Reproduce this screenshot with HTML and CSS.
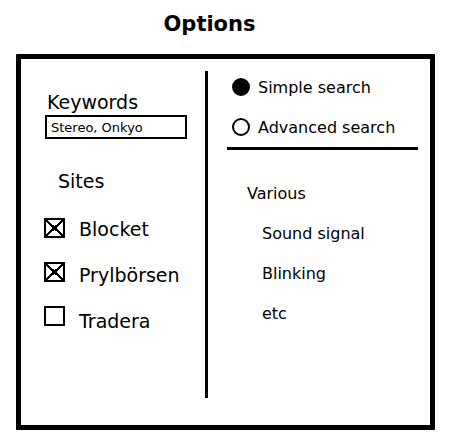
FILE: index.html
```html
<!DOCTYPE html>
<html lang="en">
<head>
<meta charset="utf-8">
<title>Options</title>
<link rel="stylesheet" href="styles.css">
</head>
<body>
<h1 class="title">Options</h1>
<form class="panel">
  <section class="filters">
    <label class="keywords-label" for="keywords">Keywords</label>
    <input class="keywords" id="keywords" type="text" value="Stereo, Onkyo">
    <h2 class="sites-title">Sites</h2>
    <div class="sites">
      <div class="boxes">
        <input class="box" id="blocket" type="checkbox" checked>
        <input class="box" id="prylborsen" type="checkbox" checked>
        <input class="box" id="tradera" type="checkbox">
      </div>
      <div class="names">
        <label for="blocket">Blocket</label>
        <label for="prylborsen">Prylbörsen</label>
        <label for="tradera">Tradera</label>
      </div>
    </div>
  </section>
  <div class="divider"></div>
  <section class="settings">
    <div class="modes">
      <label class="mode"><input class="radio" type="radio" name="mode" checked>Simple search</label>
      <label class="mode"><input class="radio" type="radio" name="mode">Advanced search</label>
    </div>
    <hr class="rule">
    <h2 class="various-title">Various</h2>
    <ul class="various">
      <li>Sound signal</li>
      <li>Blinking</li>
      <li>etc</li>
    </ul>
  </section>
</form>
</body>
</html>
```
FILE: styles.css
```css
* {
  box-sizing: border-box;
}

body {
  display: flex;
  flex-direction: column;
  min-height: 100vh;
  margin: 0;
  padding: 12px 38px 9px 16px;
  background: #fff;
  color: #000;
  font-family: "DejaVu Sans", sans-serif;
  font-size: 16px;
  line-height: 34px;
}

h1,
h2,
ul {
  margin: 0;
  padding: 0;
  font-weight: normal;
  list-style: none;
}

input {
  margin: 0;
  font-family: inherit;
  color: inherit;
}

.title {
  margin-bottom: 18px;
  padding-right: 32px;
  font-size: 21px;
  font-weight: bold;
  line-height: 24px;
  text-align: center;
}

.panel {
  flex: 1;
  display: grid;
  grid-template-columns: 184fr 3px 222fr;
  padding: 12px 0 27px;
  border: 5px solid #000;
  border-radius: 1px;
}

.divider {
  background: #000;
}

.filters {
  display: flex;
  flex-direction: column;
  padding: 19px 18px 0 24px;
  font-size: 19px;
  line-height: 24px;
}

.keywords-label {
  padding-left: 2px;
}

.keywords {
  width: 100%;
  height: 24px;
  margin-top: 1px;
  padding: 0 4px;
  border: 2px solid #000;
  border-radius: 0;
  background: #fff;
  font-size: 13px;
}

.sites-title {
  margin-top: 30px;
  padding-left: 13px;
  font-size: 19px;
}

.sites {
  display: flex;
  gap: 14px;
  margin: 24px 0 0 -1px;
}

.boxes,
.names {
  display: flex;
  flex-direction: column;
}

.boxes {
  gap: 24px;
  padding-top: 1px;
}

.names {
  gap: 22px;
}

.box {
  appearance: none;
  width: 21px;
  height: 20px;
  border: 2px solid #000;
  background: #fff;
}

.box:checked {
  background:
    linear-gradient(to top right, transparent 45%, #000 45%, #000 55%, transparent 55%),
    linear-gradient(to bottom right, transparent 45%, #000 45%, #000 55%, transparent 55%);
}

.settings {
  padding: 0 12px 0 19px;
}

.modes {
  display: flex;
  flex-direction: column;
  gap: 6px;
  padding-left: 5px;
}

.mode {
  display: flex;
  align-items: center;
  gap: 8px;
}

.radio {
  appearance: none;
  flex: none;
  width: 18px;
  height: 18px;
  margin-bottom: 2px;
  border: 2px solid #000;
  border-radius: 9px;
  background: #fff;
}

.radio:checked {
  background: #000;
}

.rule {
  height: 3px;
  margin: 2px 0 27px;
  border: 0;
  background: #000;
}

.various-title {
  padding-left: 20px;
  font-size: 16px;
}

.various {
  display: flex;
  flex-direction: column;
  gap: 6px;
  margin-top: 6px;
  padding-left: 35px;
}
```
